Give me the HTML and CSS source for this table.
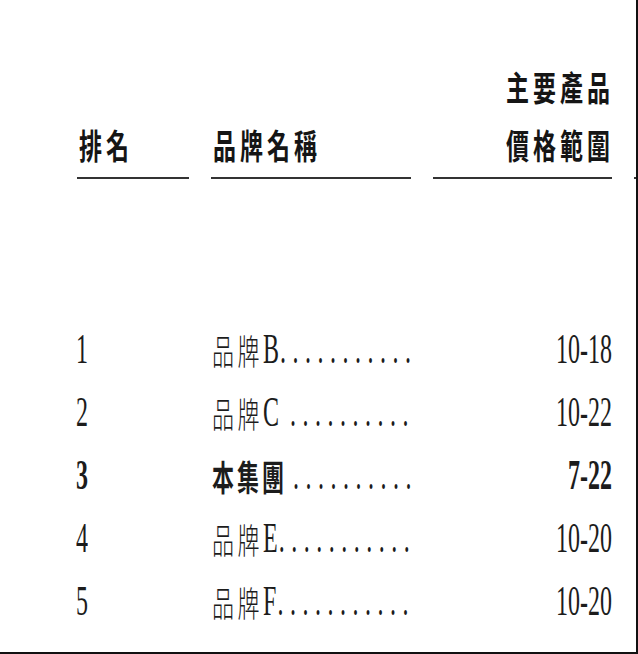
FILE: index.html
```html
<!DOCTYPE html>
<html lang="zh-Hant">
<head>
<meta charset="utf-8">
<title>排名</title>
<link rel="stylesheet" href="styles.css">
</head>
<body>
<div class="page">
  <div class="head">
    <div class="hcell"><div class="hline"><span class="ht">排名</span></div></div>
    <div class="hcell"><div class="hline"><span class="ht">品牌名稱</span></div></div>
    <div class="hcell right"><div class="hline"><span class="ht">主要產品</span></div><div class="hline"><span class="ht">價格範圍</span></div></div>
    <div class="hcell"></div>
  </div>
  <div class="body">
    <div class="row">
      <div class="cell"><span class="lat">1</span></div>
      <div class="cell"><span class="cjk">品牌</span><span class="lat">B</span><span class="lat dots">...........</span></div>
      <div class="cell right"><span class="lat">10-18</span></div>
    </div>
    <div class="row">
      <div class="cell"><span class="lat">2</span></div>
      <div class="cell"><span class="cjk">品牌</span><span class="lat">C</span><span class="lat dots sp">..........</span></div>
      <div class="cell right"><span class="lat">10-22</span></div>
    </div>
    <div class="row strong">
      <div class="cell"><span class="lat">3</span></div>
      <div class="cell"><span class="cjk">本集團</span><span class="lat dots sp2">..........</span></div>
      <div class="cell right"><span class="lat">7-22</span></div>
    </div>
    <div class="row">
      <div class="cell"><span class="lat">4</span></div>
      <div class="cell"><span class="cjk">品牌</span><span class="lat">E</span><span class="lat dots">...........</span></div>
      <div class="cell right"><span class="lat">10-20</span></div>
    </div>
    <div class="row">
      <div class="cell"><span class="lat">5</span></div>
      <div class="cell"><span class="cjk">品牌</span><span class="lat">F</span><span class="lat dots">...........</span></div>
      <div class="cell right"><span class="lat">10-20</span></div>
    </div>
  </div>
</div>
</body>
</html>
```
FILE: styles.css
```css
html, body {
  margin: 0;
  padding: 0;
  background: #fff;
}
.page {
  box-sizing: border-box;
  width: 638px;
  height: 654px;
  border-right: 2px solid #111;
  border-bottom: 2px solid #111;
  overflow: hidden;
  padding: 66px 0 0 77px;
  color: #1c1c1c;
}
.head, .row {
  display: grid;
  grid-template-columns: 112px 200px 179px 100px;
  column-gap: 22px;
}
.head {
  align-items: end;
}
.hcell {
  border-bottom: 2px solid #333;
  padding-bottom: 13px;
}
.hline {
  height: 40px;
  display: flex;
  align-items: center;
}
.hline + .hline {
  margin-top: 18px;
}
.right .hline, .cell.right {
  justify-content: flex-end;
}
.ht {
  display: inline-block;
  font-family: "Noto Sans CJK TC", "Noto Sans CJK SC", sans-serif;
  font-weight: 700;
  font-size: 23px;
  line-height: 1;
  letter-spacing: 4px;
  margin-left: 2px;
  transform: scaleY(1.48);
  color: #151515;
}
.right .ht {
  margin-right: -2px;
}
.body {
  margin-top: 138px;
  display: flex;
  flex-direction: column;
}
.row {
  height: 63px;
  align-items: center;
}
.cell {
  display: flex;
  align-items: center;
  white-space: nowrap;
}
.lat {
  display: inline-block;
  font-family: "Liberation Serif", "Times New Roman", serif;
  font-size: 24px;
  line-height: 1;
  transform: scaleY(1.72);
}
.cjk {
  display: inline-block;
  font-family: "Noto Sans CJK TC", "Noto Sans CJK SC", sans-serif;
  font-weight: 300;
  font-size: 22px;
  line-height: 1;
  letter-spacing: 3.5px;
  margin-left: 1px;
  transform: scaleY(1.6);
}
.dots {
  letter-spacing: 6.5px;
  margin-left: 1px;
}
.dots.sp {
  margin-left: 11px;
}
.dots.sp2 {
  margin-left: 6px;
}
.strong .lat, .strong .cjk {
  font-weight: 700;
}
.strong .cjk {
  letter-spacing: 3px;
}
.strong .dots {
  font-weight: 400;
}
.cell:first-child .lat {
  margin-left: -1px;
}
```
